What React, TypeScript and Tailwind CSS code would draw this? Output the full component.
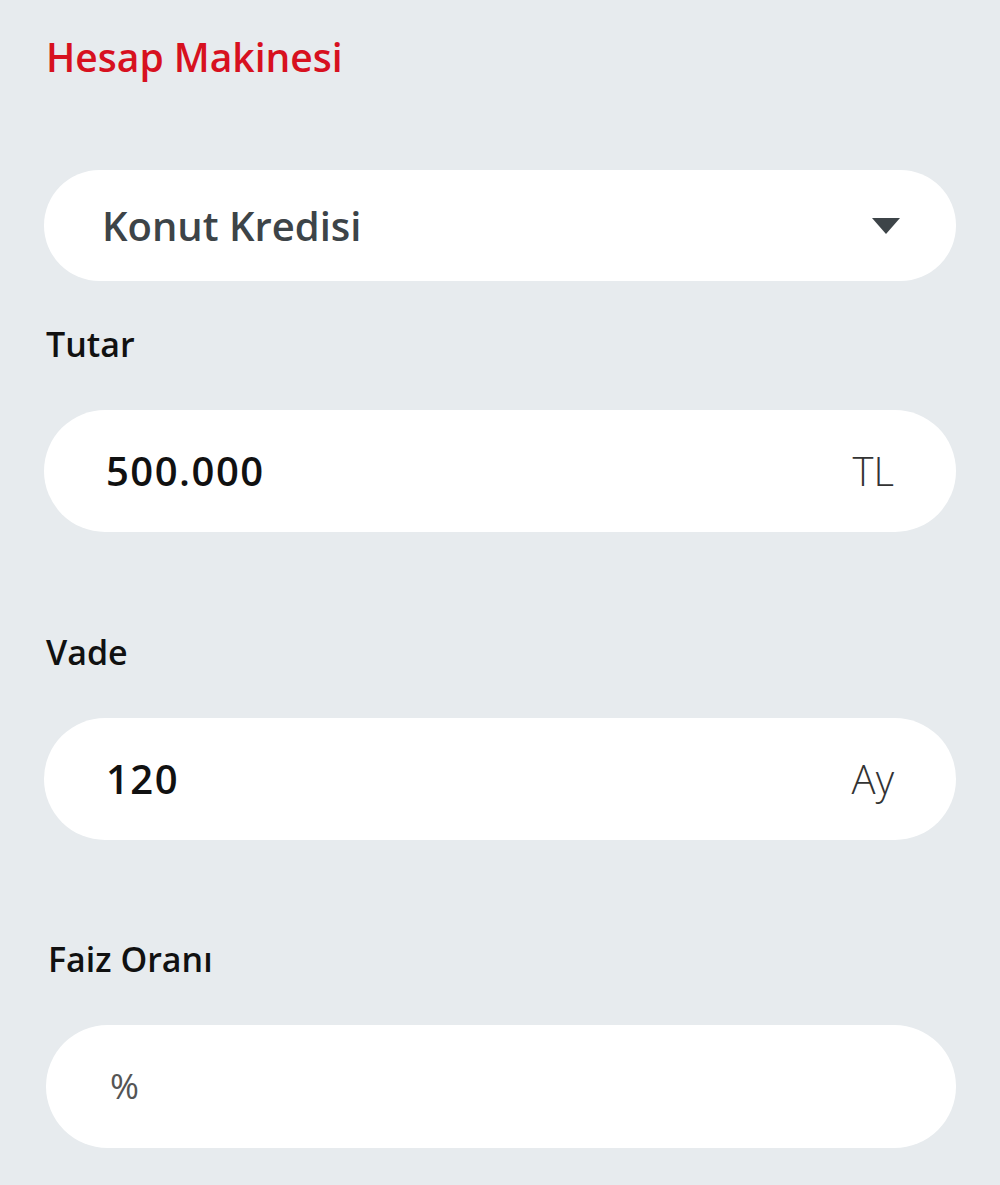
import { useState } from "react";

const font = { fontFamily: '"Open Sans", "Noto Sans", Arial, sans-serif' };

function Field({ label, value, unit, first }: { label: string; value: string; unit?: string; first?: boolean }) {
  return (
    <div className={first ? "mt-[39px]" : "mt-[96px]"}>
      <label className="block text-[34px] leading-[48px] font-semibold text-[#111] pl-[2px]">{label}</label>
      <div className="mt-[42px] h-[122px] rounded-full bg-white flex items-center justify-between pl-[62px] pr-[62px]">
        <span className="text-[40px] font-semibold text-[#111] tracking-[1.5px]">{value}</span>
        {unit && <span className="text-[40px] font-light text-[#333]">{unit}</span>}
      </div>
    </div>
  );
}

export default function App() {
  const [type] = useState("Konut Kredisi");

  return (
    <div className="min-h-[1185px] bg-[#e7ebee] px-[44px] pt-[28px]" style={font}>
      <h1 className="text-[39px] leading-[58px] font-semibold text-[#d7111f] pl-[2px]">Hesap Makinesi</h1>

      <div className="mt-[84px] h-[111px] rounded-full bg-white flex items-center justify-between pl-[58px] pr-[56px]">
        <span className="text-[40px] font-semibold text-[#3d4448]">{type}</span>
        <svg width="28" height="16" viewBox="0 0 28 16">
          <path d="M0 0 H28 L14 16 Z" fill="#3d4448" />
        </svg>
      </div>

      <Field label="Tutar" value="500.000" unit="TL" first />
      <Field label="Vade" value="120" unit="Ay" />

      <div className="mt-[95px]">
        <label className="block text-[34px] leading-[48px] font-semibold text-[#111] pl-[4px]">Faiz Oranı</label>
        <div className="mt-[42px] ml-[2px] h-[123px] rounded-full bg-white flex items-center pl-[64px]">
          <span className="text-[35px] text-[#555]">%</span>
        </div>
      </div>
    </div>
  );
}
